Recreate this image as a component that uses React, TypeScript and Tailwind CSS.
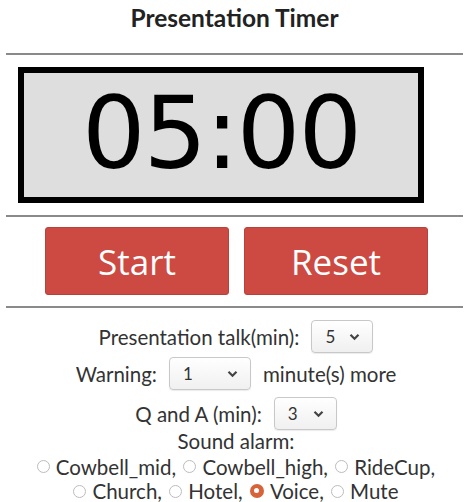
import React from "react";

function Select({ value, width }: { value: string; width: string }) {
  return (
    <span
      className={`inline-flex items-center justify-between h-[33px] ${width} pl-[13px] pr-[12px] rounded-[4px] border border-[#c8c8c8] bg-gradient-to-b from-white to-[#f0f0f0] shadow-[0_1px_1px_rgba(0,0,0,0.08)] text-[17px] text-[#333]`}
    >
      <span>{value}</span>
      <svg width="11" height="8" viewBox="0 0 11 8" className="text-[#444]">
        <path d="M1.5 1.8 L5.5 5.8 L9.5 1.8" fill="none" stroke="currentColor" strokeWidth="2.2" />
      </svg>
    </span>
  );
}

function Radio({ label, checked }: { label: string; checked?: boolean }) {
  return (
    <span className="inline-flex items-center gap-[6px] mx-[1px]">
      {checked ? (
        <span className="inline-block w-[14px] h-[14px] rounded-full bg-[#d6633a] relative">
          <span className="absolute inset-0 m-auto w-[5px] h-[5px] rounded-full bg-white" />
        </span>
      ) : (
        <span className="inline-block w-[13px] h-[13px] rounded-full border border-[#bcbcbc] bg-white" />
      )}
      <span>{label}</span>
    </span>
  );
}

export default function App() {
  return (
    <div className="w-[469px] h-[502px] bg-white font-['Lato','Open_Sans',sans-serif] text-[#333] overflow-hidden">
      <h1 className="h-[53px] text-center text-[24.5px] font-bold text-[#222]">
        Presentation Timer
      </h1>
      <div className="mx-[6px] h-[2px] bg-[#8a8a8a]" />
      <div className="mt-[12px] ml-[18px] w-[406px] h-[136px] border-[6px] border-black bg-[#dedede] flex items-center justify-center">
        <span className="font-['DejaVu_Sans',sans-serif] text-[100px] leading-none text-black pb-[2px] tracking-[-2px]">
          05:00
        </span>
      </div>
      <div className="mt-[12px] mx-[6px] h-[2px] bg-[#8a8a8a]" />
      <div className="mt-[10px] ml-[45px] flex gap-[15px]">
        {["Start", "Reset"].map((t) => (
          <button
            key={t}
            className="w-[184px] h-[68px] rounded-[3px] bg-[#cc4a42] border border-[#b8413a] text-white text-[35px] font-['Open_Sans',sans-serif] leading-none"
          >
            {t}
          </button>
        ))}
      </div>
      <div className="mt-[11px] mx-[6px] h-[2px] bg-[#8a8a8a]" />
      <div className="pl-[3px] flex flex-col items-center text-[20.5px] leading-[24px]">
        <div className="mt-[12px] flex items-center gap-[12px]">
          <span>Presentation talk(min):</span>
          <Select value="5" width="w-[62px]" />
        </div>
        <div className="mt-[4px] flex items-center gap-[12px]">
          <span>Warning:</span>
          <Select value="1" width="w-[82px]" />
          <span>minute(s) more</span>
        </div>
        <div className="mt-[7px] flex items-center gap-[12px]">
          <span>Q and A (min):</span>
          <Select value="3" width="w-[63px]" />
        </div>
        <div className="mt-[-1px]">Sound alarm:</div>
        <div className="text-center whitespace-nowrap">
          <Radio label="Cowbell_mid," /> <Radio label="Cowbell_high," /> <Radio label="RideCup," />
        </div>
        <div className="mt-[-1px] text-center whitespace-nowrap">
          <Radio label="Church," /> <Radio label="Hotel," /> <Radio label="Voice," checked /> <Radio label="Mute" />
        </div>
      </div>
    </div>
  );
}
